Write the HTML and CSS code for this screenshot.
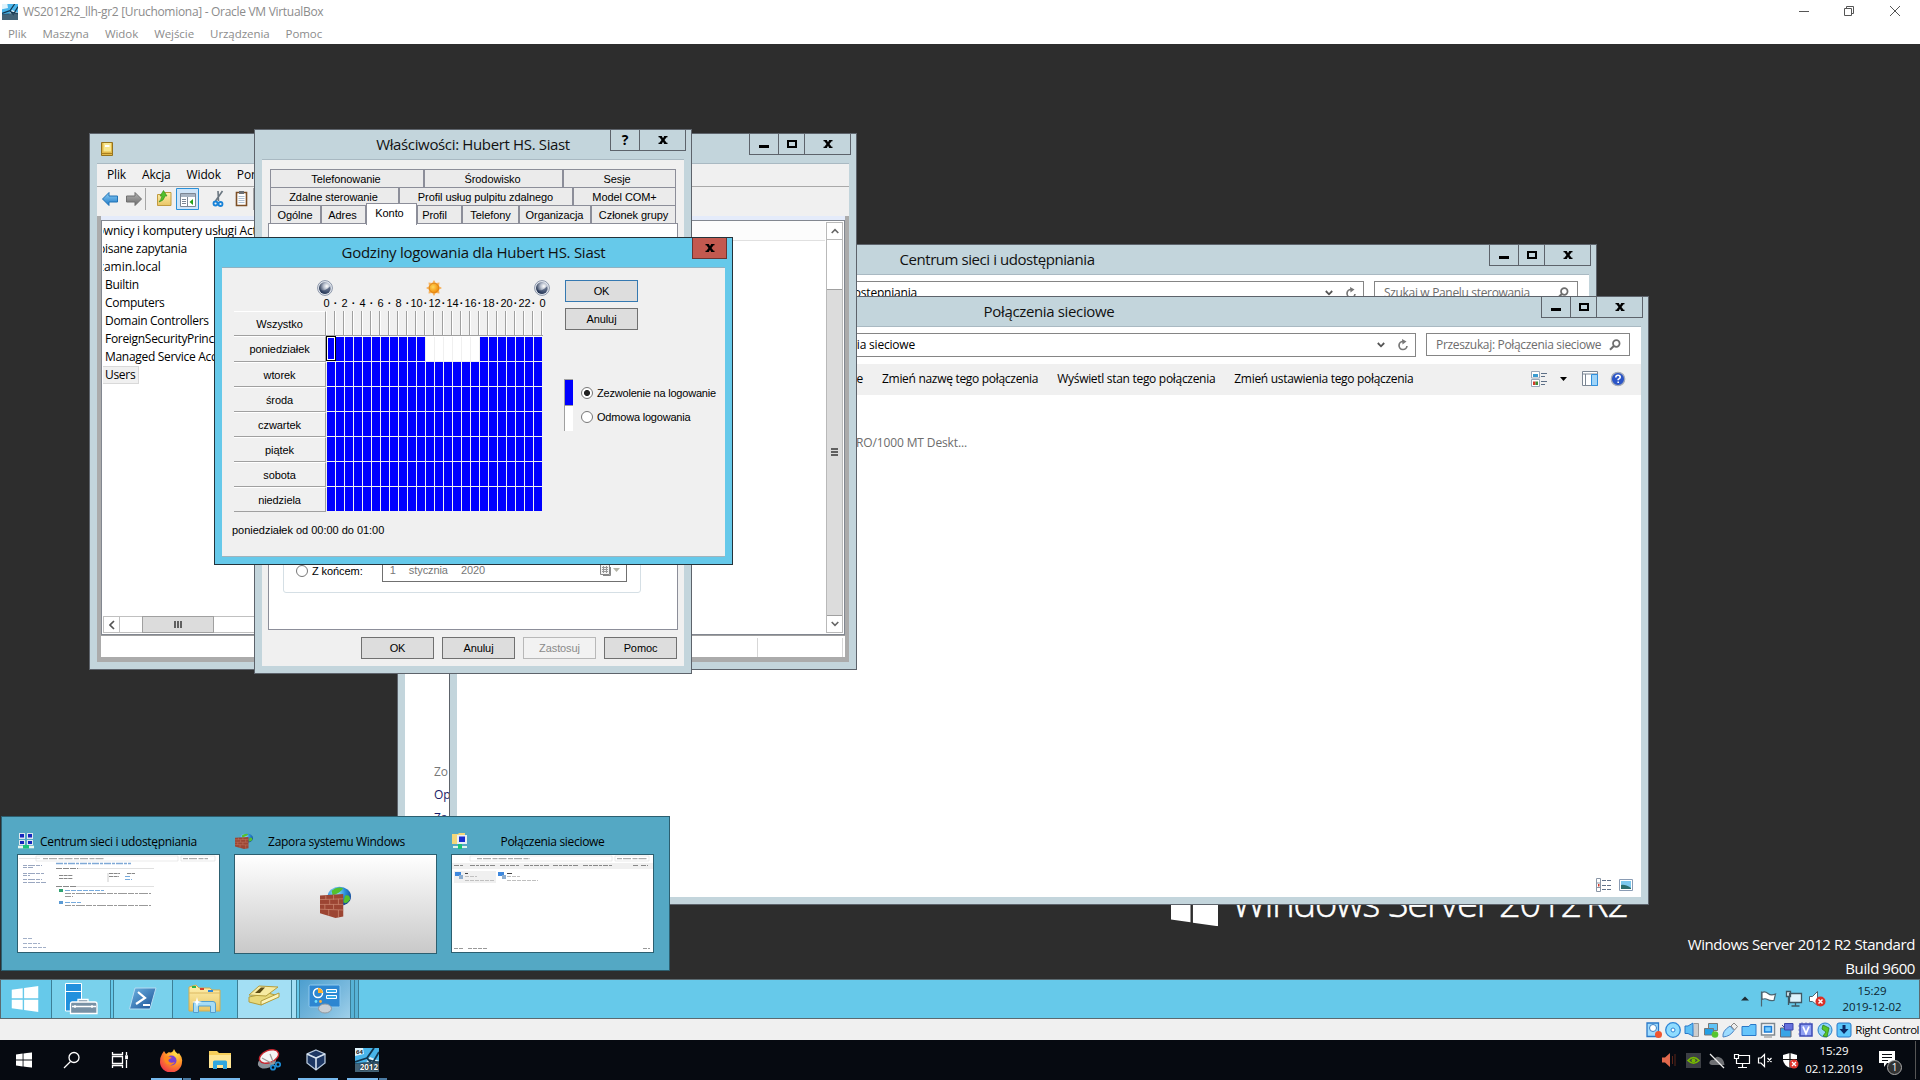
FILE: index.html
```html
<!DOCTYPE html>
<html lang="pl">
<head>
<meta charset="utf-8">
<title>WS2012R2_llh-gr2 [Uruchomiona] - Oracle VM VirtualBox</title>
<link rel="stylesheet" href="styles.css">
</head>
<body>
<svg class="defs" width="0" height="0">
  <defs>
    <linearGradient id="gBlue" x1="0" y1="0" x2="0" y2="1"><stop offset="0" stop-color="#8fd0f5"/><stop offset="1" stop-color="#1b78c8"/></linearGradient>
    <linearGradient id="gGray" x1="0" y1="0" x2="0" y2="1"><stop offset="0" stop-color="#b5b5b5"/><stop offset="1" stop-color="#6a6a6a"/></linearGradient>
    <linearGradient id="gFold" x1="0" y1="0" x2="0" y2="1"><stop offset="0" stop-color="#fff1b0"/><stop offset="1" stop-color="#e9c565"/></linearGradient>
    <linearGradient id="gPs" x1="0" y1="0" x2="1" y2="1"><stop offset="0" stop-color="#6fb4e4"/><stop offset="1" stop-color="#174f94"/></linearGradient>
    <radialGradient id="gMoon" cx=".65" cy=".35" r=".7"><stop offset="0" stop-color="#ffffff"/><stop offset=".4" stop-color="#b4bccb"/><stop offset="1" stop-color="#1c2b48"/></radialGradient>
    <radialGradient id="gSun" cx=".4" cy=".4" r=".6"><stop offset="0" stop-color="#ffd75a"/><stop offset="1" stop-color="#f08c0a"/></radialGradient>
    <radialGradient id="gGlobe" cx=".35" cy=".3" r=".8"><stop offset="0" stop-color="#a8ecff"/><stop offset=".5" stop-color="#2a8ddb"/><stop offset="1" stop-color="#0c3584"/></radialGradient>
    <radialGradient id="gFox" cx=".7" cy=".2" r=".9"><stop offset="0" stop-color="#ffe04a"/><stop offset=".5" stop-color="#ff9127"/><stop offset="1" stop-color="#f0324c"/></radialGradient>
    <symbol id="moon" viewBox="0 0 16 16"><circle cx="8" cy="8" r="7.4" fill="#e8ecf2" stroke="#8994a8"/><circle cx="8" cy="8" r="6" fill="url(#gMoon)"/><path d="M2.600 9.500C6 11.500 10 10 12.500 6.500C14.500 9 12 13.800 8 13.800C5 13.800 3 11.500 2.600 9.500Z" fill="#25375a" opacity=".6"/></symbol>
    <symbol id="min" viewBox="0 0 10 10"><rect y="6" width="10" height="3"/></symbol>
    <symbol id="max" viewBox="0 0 10 10"><path d="M0 1H10V9H0ZM2 3V7H8V3Z" fill-rule="evenodd"/></symbol>
    <symbol id="close" viewBox="0 0 10 10"><path d="M0.500 1H3.800L5 3.200L6.200 1H9.500V2.200H8.600L6.500 5L8.600 7.800H9.500V9H6.200L5 6.800L3.800 9H.5V7.800H1.400L3.500 5L1.400 2.200H.5Z"/></symbol>
    <symbol id="mag" viewBox="0 0 12 12"><circle cx="7.300" cy="4.500" r="3.300" fill="none" stroke="#6d6d6d" stroke-width="1.700"/><path d="M4.800 7L1 10.800" stroke="#6d6d6d" stroke-width="2"/></symbol>
    <symbol id="chev" viewBox="0 0 8 8"><path d="M.8 2L4 5.300L7.200 2" fill="none" stroke="#555" stroke-width="1.800"/></symbol>
    <symbol id="refresh" viewBox="0 0 12 12"><path d="M6 2.500A4 4 0 1 0 10 7" fill="none" stroke="#777" stroke-width="1.700"/><path d="M5 0L9.500 2.600L5.500 5.400Z" fill="#777"/></symbol>
    <symbol id="flag8" viewBox="0 0 27 26"><path d="M0 3.800L11.200 2.200V12.300H0ZM12.600 2L27 0V12.300H12.600ZM0 13.700H11.200V23.800L0 22.200ZM12.600 13.700H27V26L12.600 24Z"/></symbol>
    <symbol id="wall" viewBox="0 0 32 40"><circle cx="20" cy="13" r="12" fill="url(#gGlobe)"/><path d="M12 6Q18 0 24 3Q20 9 13 12ZM26 12Q31 10 31 17Q27 24 24 20Z" fill="#54c02e"/><path d="M0 12L24 10V38L16 40L0 34Z" fill="#9c4533"/><path d="M0 17L24 16M0 23L24 23M0 29L24 30M6 12V17M14 11V17M10 17V23M19 16V23M5 23V29M14 23V29M9 29V37M19 30V39" stroke="#cf8b74" stroke-width=".8" fill="none"/></symbol>
    <symbol id="pcs" viewBox="0 0 16 16"><path d="M1 0H7V6H1ZM9 0H15V6H9ZM1 7H7V12H1ZM9 7H15V12H9Z" fill="#dce6ee"/><path d="M2 1H6V4.500H2ZM10 1H14V4.500H10ZM2 8H6V11H2ZM10 8H14V11H10Z" fill="#1626bd"/><path d="M0 14H16" stroke="#e6f5ee" stroke-width="2.600"/><path d="M5 12H11V15.500H5Z" fill="#19c37b"/></symbol>
    <symbol id="pcfold" viewBox="0 0 16 16"><path d="M0 1H6L7 0H13V11H0Z" fill="#f3d77b"/><path d="M5 2H15V11H5Z" fill="#e8eef6"/><path d="M7 3.500H13V9H7Z" fill="#1a2ed0"/><path d="M1 14H15" stroke="#dff4ea" stroke-width="2"/><path d="M6 11H10V16H6Z" fill="#19c37b"/></symbol>
    <symbol id="disc" viewBox="0 0 16 16"><circle cx="8" cy="8" r="7.300" fill="#8fdcff" stroke="#2e86d6" stroke-width="1.300"/><circle cx="8" cy="8" r="2" fill="#fff" stroke="#2e86d6"/></symbol>
    <symbol id="vmicon" viewBox="0 0 24 24"><rect width="24" height="24" fill="#dff3fc"/><path d="M8 0H24V13L15 9L10 16H0V8L9 6Z" fill="#48b4ea"/><path d="M19 0L12 10L17 16L24 4M12 10L0 14M14 12L24 15" stroke="#12364f" stroke-width="1.800" fill="none"/><path d="M0 15L24 13V24H0Z" fill="#28495f" opacity=".85"/></symbol>
  </defs>
</svg>

<div class="host">
  <header class="vb-title">
    <svg class="vb-icon" viewBox="0 0 24 24" width="16" height="16"><use href="#vmicon"/></svg>
    <span class="vb-name">WS2012R2_llh-gr2 [Uruchomiona] - Oracle VM VirtualBox</span>
    <svg class="vb-controls" width="104" height="12" viewBox="0 0 104 12" fill="none" stroke="#555"><path d="M1 6.500H11M46.500 3.500H53.500V10.500H46.500ZM48.500 3.500V1.500H55.500V8.500H53.500M92 1L102 11M102 1L92 11"/></svg>
  </header>
  <nav class="vb-menu"><span>Plik</span><span>Maszyna</span><span>Widok</span><span>Wejście</span><span>Urządzenia</span><span>Pomoc</span></nav>

  <main class="desktop">
    <svg class="wall-flag" viewBox="0 0 27 26" width="47" height="47" fill="#fff"><use href="#flag8"/></svg>
    <div class="wall-name">Windows Server 2012 <span>R2</span></div>
    <div class="build">Windows Server 2012 R2 Standard<br>Build 9600</div>

    <section class="win centrum">
      <div class="caption"><h2>Centrum sieci i udostępniania</h2>
        <div class="cap-btns"><b><svg width="10" height="10"><use href="#min"/></svg></b><b><svg width="10" height="10"><use href="#max"/></svg></b><b><svg width="10" height="10"><use href="#close"/></svg></b></div></div>
      <div class="client">
        <div class="addr-row">
          <div class="addr"><span class="crumb">Centrum sieci i udostępniania</span><svg class="a-chev" width="8" height="8"><use href="#chev"/></svg><svg width="12" height="12"><use href="#refresh"/></svg></div>
          <div class="search"><span>Szukaj w Panelu sterowania</span><svg width="12" height="12"><use href="#mag"/></svg></div>
        </div>
        <div class="see-also"><span class="dim">Zo</span><span>Op</span><span>Za</span></div>
      </div>
    </section>

    <section class="win conn">
      <div class="caption"><h2>Połączenia sieciowe</h2>
        <div class="cap-btns"><b><svg width="10" height="10"><use href="#min"/></svg></b><b><svg width="10" height="10"><use href="#max"/></svg></b><b><svg width="10" height="10"><use href="#close"/></svg></b></div></div>
      <div class="client">
        <div class="addr-row">
          <div class="addr"><span class="crumb">Połączenia sieciowe</span><svg class="a-chev" width="8" height="8"><use href="#chev"/></svg><svg width="12" height="12"><use href="#refresh"/></svg></div>
          <div class="search"><span>Przeszukaj: Połączenia sieciowe</span><svg width="12" height="12"><use href="#mag"/></svg></div>
        </div>
        <div class="cmdbar">
          <span class="c0">e</span><span class="c1">Zmień nazwę tego połączenia</span><span class="c2">Wyświetl stan tego połączenia</span><span class="c3">Zmień ustawienia tego połączenia</span>
          <svg class="cmd-icons" width="96" height="18" viewBox="0 0 96 18">
            <path d="M.5 1.500H8.500V8H.5ZM.5 9.500H8.500V16.500H.5Z" fill="#fff" stroke="#9aa7b8"/><path d="M2 4H7V7H2Z" fill="#3a9bd0"/><path d="M2 11.500H4.500V15H2Z" fill="#d43b2b"/><path d="M4.500 11.500H7V15H4.500Z" fill="#3b8b35"/>
            <path d="M10 3.500H16M10 6.500H14M10 11.500H16M10 14.500H14" stroke="#5c6f86"/>
            <path d="M29 7H36L32.500 11Z" fill="#000"/>
            <path d="M51.500 1.500H66.500V15.500H51.500Z" fill="#fff" stroke="#7c8794"/><path d="M51.500 4H66.500M54.500 4V15" stroke="#7c8794"/><path d="M60.500 4.500H66.500V15.500H60.500Z" fill="#9fd4f8" stroke="#2f8fdd"/>
            <circle cx="87" cy="9" r="6.700" fill="#2b55c7" stroke="#a5acb8" stroke-width="1.300"/><path d="M84.800 7.400Q84.800 5.200 87 5.200T89.200 7.200Q89.200 8.300 87.200 9.400V10.300M87.200 11.600V13" stroke="#fff" stroke-width="1.600" fill="none"/>
          </svg>
        </div>
        <p class="adapter">Intel(R) PRO/1000 MT Deskt...</p>
        <svg class="view-icons" width="38" height="14" viewBox="0 0 38 14"><path d="M.5 .5H4.500V13.500H.5ZM.5 5H4.500M.5 9.500H4.500" fill="#fff" stroke="#8a96a6"/><path d="M6 2.500H10M11 2.500H15M6 7.500H10M11 7.500H15M6 11.500H10M11 11.500H15" stroke="#61728a"/><path d="M2 6H3.500V8.500H2Z" fill="#d43b2b"/><path d="M23.500 1.500H36.500V12.500H23.500Z" fill="#fff" stroke="#8a9cb4"/><path d="M25 3H35V11H25Z" fill="#7cc9ee"/><path d="M25 7Q29 6 35 10V11H25Z" fill="#2b6e6d"/></svg>
      </div>
    </section>

    <section class="win mmc">
      <div class="caption">
        <svg class="mmc-icon" width="13" height="16" viewBox="0 0 13 16"><path d="M.5 1.500H11.500V14.500H.5Z" fill="#e2b94a" stroke="#94731e"/><path d="M2.500 2H10V10.500H2.500Z" fill="#f8e78e"/><path d="M4 4H8.500V6H4Z" fill="#fff"/><path d="M.5 12.500H11.500" stroke="#a97f1f"/></svg>
        <div class="cap-btns"><b><svg width="10" height="10"><use href="#min"/></svg></b><b><svg width="10" height="10"><use href="#max"/></svg></b><b><svg width="10" height="10"><use href="#close"/></svg></b></div></div>
      <div class="client">
        <nav class="mmc-menu"><span>Plik</span><span>Akcja</span><span>Widok</span><span>Pomoc</span></nav>
        <div class="mmc-tools">
          <svg width="156" height="24" viewBox="0 0 156 24">
            <path d="M.5 12L7 5.500V9H15.500V15H7V18.500Z" fill="url(#gBlue)" stroke="#2173b5"/>
            <path d="M39.500 12L33 5.500V9H24.500V15H33V18.500Z" fill="url(#gGray)" stroke="#6f6f6f"/>
            <path d="M43.500 1V23M151.500 1V23" stroke="#a6a6a6"/>
            <path d="M55.500 7.500H60L61.500 5.500H69V18.500H55.500Z" fill="url(#gFold)" stroke="#c19a3f"/><path d="M57 15Q59 13 60 9L58 9L61.500 3.500L65 9H63Q62 14 57 15Z" fill="#52bf2c" stroke="#2f8a18" stroke-width=".6"/>
            <path d="M74.500 1.500H96.500V22.500H74.500Z" fill="#cfe4f7" stroke="#2a90d8"/><path d="M78.500 6.500H93.500V19.500H78.500Z" fill="#fff" stroke="#7d8794"/><path d="M79 7H93V10H79Z" fill="#a8b4c2"/><path d="M85.500 10V19M80 12.500H84M80 14.500H84M80 16.500H84" stroke="#7d8794"/><path d="M91 12V18L87.500 15Z" fill="#25a11a"/>
            <path d="M113.500 14L120.500 4M116.500 14L116 4" stroke="#6a7680" stroke-width="1.600"/><circle cx="113.500" cy="16.500" r="2" fill="none" stroke="#1883d8" stroke-width="1.800"/><circle cx="118.500" cy="17" r="2" fill="none" stroke="#1883d8" stroke-width="1.800"/>
            <path d="M134.500 5.500H144.500V18.500H134.500Z" fill="#fff" stroke="#7d4f26" stroke-width="1.600"/><path d="M137 4H142V7H137Z" fill="#6b6f74"/><path d="M136.500 9.500H142.500M136.500 11.500H142.500M136.500 13.500H142.500M136.500 15.500H142.500" stroke="#9ab0c7" stroke-width=".8"/>
          </svg>
        </div>
        <div class="mmc-body">
          <div class="panes">
            <div class="tree-pane">
              <ul class="tree">
                <li class="t-root">Użytkownicy i komputery usługi Active</li><li class="t-saved">Zapisane zapytania</li><li class="t-dom">egzamin.local</li>
                <li>Builtin</li><li>Computers</li><li>Domain Controllers</li><li>ForeignSecurityPrincipals</li><li>Managed Service Accounts</li><li><span class="sel">Users</span></li>
              </ul>
              <div class="hscroll"><b><svg width="6" height="10" viewBox="0 0 6 10"><path d="M5 1L1 5L5 9" fill="none" stroke="#555" stroke-width="1.700"/></svg></b><i></i></div>
            </div>
            <div class="list-pane"><div class="list-head"></div></div>
            <div class="vscroll"><b><svg width="8" height="6" viewBox="0 0 8 6"><path d="M.7 5L4 1.700L7.300 5" fill="none" stroke="#666" stroke-width="1.600"/></svg></b><span class="gap"></span><span class="thumb"><i></i></span><b><svg width="8" height="6" viewBox="0 0 8 6"><path d="M.7 1L4 4.300L7.300 1" fill="none" stroke="#666" stroke-width="1.600"/></svg></b></div>
          </div>
          <div class="mmc-status"></div>
        </div>
      </div>
    </section>

    <section class="win props">
      <div class="caption"><h2>Właściwości: Hubert HS. Siast</h2><div class="cap-btns two"><b class="q">?</b><b><svg width="10" height="10"><use href="#close"/></svg></b></div></div>
      <div class="client">
        <div class="tabs r1"><span>Telefonowanie</span><span>Środowisko</span><span>Sesje</span></div>
        <div class="tabs r2"><span>Zdalne sterowanie</span><span>Profil usług pulpitu zdalnego</span><span>Model COM+</span></div>
        <div class="tabs r3"><span>Ogólne</span><span>Adres</span><span class="on">Konto</span><span>Profil</span><span>Telefony</span><span>Organizacja</span><span>Członek grupy</span></div>
        <div class="page">
          <div class="group"><i class="radio"></i><span class="lbl">Z końcem:</span>
            <div class="date"><span>1</span><span>stycznia</span><span>2020</span><svg width="20" height="12" viewBox="0 0 20 12"><path d="M.5 .5H9.500V10.500H.5Z" fill="#f4f4f4" stroke="#888"/><path d="M2 3.500H8M2 5.500H8M2 7.500H8M3.500 2V9M6.500 2V9" stroke="#999"/><path d="M10.500 3V11.500H3" fill="none" stroke="#888"/><path d="M13 4H20L16.500 8Z" fill="#b5b5a8"/></svg></div>
          </div>
        </div>
        <div class="dlg-btns"><button>OK</button><button>Anuluj</button><button class="off">Zastosuj</button><button>Pomoc</button></div>
      </div>
    </section>

    <section class="win hours-dlg">
      <div class="caption"><h2>Godziny logowania dla Hubert HS. Siast</h2><div class="cap-btns one"><b><svg width="10" height="10"><use href="#close"/></svg></b></div></div>
      <div class="client">
        <div class="sched">
          <div class="sky"><svg width="16" height="16"><use href="#moon"/></svg><svg width="16" height="16" viewBox="0 0 16 16"><path d="M8 0L9.800 3L13.500 2.500L13 6.200L16 8L13 9.800L13.500 13.500L9.800 13L8 16L6.200 13L2.500 13.500L3 9.800L0 8L3 6.200L2.500 2.500L6.200 3Z" fill="#f6b25c"/><circle cx="8" cy="8" r="4.800" fill="url(#gSun)" stroke="#d97b0c" stroke-width=".7"/></svg><svg width="16" height="16"><use href="#moon"/></svg></div>
          <div class="ticks"><span>0</span><i>·</i><span>2</span><i>·</i><span>4</span><i>·</i><span>6</span><i>·</i><span>8</span><i>·</i><span>10</span><i>·</i><span>12</span><i>·</i><span>14</span><i>·</i><span>16</span><i>·</i><span>18</span><i>·</i><span>20</span><i>·</i><span>22</span><i>·</i><span>0</span></div>
          <div class="day all"><b>Wszystko</b><div class="cols"></div></div>
          <div class="day mon"><b>poniedziałek</b><div class="bar h11"><i class="cursor"></i></div><div class="bar h6 deny"></div><div class="bar h7"></div></div>
          <div class="day"><b>wtorek</b><div class="bar"></div></div>
          <div class="day"><b>środa</b><div class="bar"></div></div>
          <div class="day"><b>czwartek</b><div class="bar"></div></div>
          <div class="day"><b>piątek</b><div class="bar"></div></div>
          <div class="day"><b>sobota</b><div class="bar"></div></div>
          <div class="day"><b>niedziela</b><div class="bar"></div></div>
          <p class="range">poniedziałek od 00:00 do 01:00</p>
        </div>
        <div class="side">
          <button class="def">OK</button><button>Anuluj</button>
          <div class="opts"><div class="swatches"><i class="allow"></i><i></i></div>
            <div class="radios"><label><i class="radio checked"></i><span class="o1">Zezwolenie na logowanie</span></label><label><i class="radio"></i><span class="o2">Odmowa logowania</span></label></div></div>
        </div>
      </div>
    </section>

    <aside class="peek">
      <div class="card"><h3><svg width="16" height="16"><use href="#pcs"/></svg><span>Centrum sieci i udostępniania</span></h3>
        <svg class="shot" width="201" height="97" viewBox="0 0 201 97" fill="none"><path d="M1 3.500H22" stroke="#e6e6e6"/><path d="M18 1H160V6H18ZM163 1H197V6H163Z" stroke="#d4d4d4" stroke-width=".5"/><path d="M25 3.700H87M165 3.700H190" stroke="#9a9a9a" stroke-dasharray="5 1 8 1.500"/><path d="M5 10.500H24M5 12.500H15M5 18.500H26M5 20.500H12M5 24.500H24M5 27.500H28" stroke="#9aa7c0" stroke-dasharray="4 1 7 1"/><path d="M38 8.500H113" stroke="#7fa9d6" stroke-width="1.500" stroke-dasharray="7 1 3 1"/><path d="M38 13.500H60M38 31.500H58" stroke="#888" stroke-dasharray="6 1"/><path d="M60 13.500H136M58 31.500H136" stroke="#e0e0e0"/><path d="M41 20.500H55M41 23.500H55M91 18.500H102M91 21.500H101M109 18.500H117" stroke="#888" stroke-dasharray="4 .6"/><path d="M107 21.500H113M107 24.500H114M47 35.500H86M47 47.500H63" stroke="#77abdd" stroke-dasharray="5 1"/><path d="M47 38.500H133M47 41.500H55M47 50.500H133" stroke="#999" stroke-dasharray="6 1 3 1 9 1"/><path d="M41 34H45V37H41Z" fill="#31a371"/><path d="M41 46H45V49H41Z" fill="#5b9bd5"/><path d="M90 18V27" stroke="#ccc"/><path d="M5 83.500H15M5 88.500H22M5 92.500H28" stroke="#a3b0c8" stroke-dasharray="4 1"/></svg></div>
      <div class="card"><h3><svg width="18" height="16" viewBox="0 0 32 40" preserveAspectRatio="none"><use href="#wall"/></svg><span>Zapora systemu Windows</span></h3>
        <div class="shot blank"><svg width="31" height="32" viewBox="0 0 32 40" preserveAspectRatio="none"><use href="#wall"/></svg></div></div>
      <div class="card"><h3><svg width="16" height="16"><use href="#pcfold"/></svg><span>Połączenia sieciowe</span></h3>
        <svg class="shot" width="201" height="97" viewBox="0 0 201 97" fill="none"><path d="M18 1H160V6H18ZM163 1H197V6H163Z" stroke="#d4d4d4" stroke-width=".5"/><path d="M25 3.700H78M165 3.700H196" stroke="#9a9a9a" stroke-dasharray="5 1 8 1.500"/><path d="M0 8H201V14H0Z" fill="#f0f0f0"/><path d="M2 10.500H12M18 10.500H44M48 10.500H68M72 10.500H97M101 10.500H127M131 10.500H161M181 10.500H186M189 10.500H196" stroke="#888" stroke-dasharray="5 1 3 1"/><path d="M2 16H44V28H2Z" fill="#f0f0f0"/><path d="M3 17H9V21H3ZM46 17H52V21H46Z" fill="#3e88de"/><path d="M7 20H11V24H7ZM50 20H54V24H50Z" fill="#8eaecf"/><path d="M13 18.500H16M55 18.500H60" stroke="#444"/><path d="M13 21.500H25M13 25.500H42M55 21.500H68M55 25.500H86" stroke="#c0c0c0" stroke-dasharray="4 1"/><path d="M2 93.500H12M16 93.500H36M191 93.500H198" stroke="#999" stroke-dasharray="4 1"/></svg></div>
    </aside>
  </main>

  <div class="vm-bar">
    <div class="vt start"><svg width="28" height="26" viewBox="0 0 27 26" fill="#fff"><use href="#flag8"/></svg></div>
    <div class="vt srv"><svg width="34" height="34" viewBox="0 0 34 34"><path d="M1.500 1.500H17.500V29H1.500Z" fill="#2190dd" stroke="#fff"/><path d="M1.500 9.500H17.500" stroke="#fff"/><path d="M14 20V17.500H24V20M8 20H31Q33 20 33 22V31.500H6.500V22Q6.500 20 8 20Z" fill="#7891a5" stroke="#fff" stroke-width="1.300"/><path d="M8 24.500H32M11 23V26M28 23V26" stroke="#fff" stroke-width="1.300"/></svg></div>
    <div class="vt ps"><svg width="30" height="26" viewBox="0 0 30 26"><path d="M7 2H28L22 23H1.500Z" fill="url(#gPs)" stroke="#b6dcf2"/><path d="M10 6L17 12L8 18M15 19H22" stroke="#fff" stroke-width="2.200" fill="none"/></svg></div>
    <div class="vt exp"><svg width="34" height="30" viewBox="0 0 34 30"><path d="M1 3L8 1L11 4H22L24 6H32V27H1Z" fill="url(#gFold)" stroke="#d3ad50"/><path d="M1 9H32" stroke="#dcb963"/><path d="M4 2H8V4H4Z" fill="#2cb34b"/><path d="M12 4H16V6H12Z" fill="#d8422c"/><path d="M20 6H25V8H20Z" fill="#2f87d8"/><path d="M5.500 28.500V20Q5.500 17.500 8 17.500H25Q27.500 17.500 27.500 20V28.500H22.500V22H10.500V28.500Z" fill="#a6dcf6" stroke="#539fce"/><path d="M9 13L10 17L14 18L10 19L9 23L8 19L4 18L8 17Z" fill="#fff"/></svg></div>
    <div class="vt ad"><svg width="34" height="22" viewBox="0 0 34 22"><path d="M2 12L21 8L32 11L14 20L2 17Z" fill="#e8d97a" stroke="#b39d3c"/><path d="M2 10L12 1L31 2L19 11Z" fill="#f7eba2" stroke="#b39d3c"/><path d="M8 8L14 2.500L18 2.500L13 8Z" fill="#5b4c14"/><path d="M14 20V16L32 8V12Z" fill="#fbf3b9" stroke="#b39d3c"/></svg></div>
    <div class="vt stack1"></div>
    <div class="vt cp"><svg width="34" height="30" viewBox="0 0 34 30"><rect x="1" y="1" width="31" height="22" rx="1.500" fill="#2d86d1" stroke="#8ec9ee"/><circle cx="10" cy="9" r="4.500" fill="none" stroke="#fff" stroke-width="1.500"/><path d="M10 4A5 5 0 0 1 15 9L10 9Z" fill="#ffaf2b"/><path d="M18.500 5.500H28.500V8.500H18.500ZM18.500 11.500H28.500V14.500H18.500Z" fill="#35a9e8" stroke="#fff"/><circle cx="8" cy="17.500" r="1.400" fill="#6de0ff"/><circle cx="12.500" cy="17.500" r="1.400" fill="#ffb13b"/><ellipse cx="17" cy="24.500" rx="6.500" ry="4.500" fill="#c9d0d6" stroke="#8f989f"/></svg></div>
    <div class="vt stack2"></div>
    <svg class="vm-tray" width="92" height="20" viewBox="0 0 92 20"><path d="M4 11.500L8 7.500L12 11.500Z" fill="#1c2b33"/><path d="M24.500 2.500V17.500M25 3.500Q28 2 31 4.500T38.500 5L37 11.500Q33 12 30.500 10.500T25 10.500Z" fill="#fff" stroke="#4c6470" stroke-width="1.200"/><path d="M52.500 4.500H64.500V13.500H52.500ZM58.500 14V16.500M54.500 17H62.500M49.500 2.500H53.500V7.500H49.500ZM51.500 8V16" fill="#dff3fb" stroke="#3f5863" stroke-width="1.300"/><path d="M72.500 7.500H75.500L80.500 2.500V16.500L75.500 12.500H72.500Z" fill="#fff" stroke="#4c6470"/><circle cx="83.500" cy="12.500" r="5" fill="#da2f26"/><path d="M81.500 10.500L85.500 14.500M85.500 10.500L81.500 14.500" stroke="#fff" stroke-width="1.500"/></svg>
    <div class="vm-clock">15:29<br>2019-12-02</div>
  </div>

  <div class="vb-status">
    <svg viewBox="0 0 16 16"><path d="M1 1H12.500V14.500H1Z" fill="#9fdcff" stroke="#2a78c8" stroke-width="1.300"/><circle cx="7" cy="6" r="3.500" fill="#fff" stroke="#3e7fc0"/><circle cx="12.500" cy="12.500" r="3.500" fill="#f0542e"/></svg>
    <svg><use href="#disc"/></svg>
    <svg viewBox="0 0 16 16"><path d="M10 1.500H14.500V14.500H8" fill="#ccc" stroke="#999"/><path d="M1 4H4L9 1V14L4 11.500H1Z" fill="#5fc0f5" stroke="#2a78c8"/></svg>
    <svg viewBox="0 0 16 16"><path d="M5.500 1.500H14.500V8.500H5.500Z" fill="#5ec3f7" stroke="#777"/><path d="M1.500 6.500H10.500V13H1.500Z" fill="#239fe4" stroke="#777"/><circle cx="12" cy="12.500" r="3.300" fill="#56c530"/></svg>
    <svg viewBox="0 0 16 16"><path d="M1 15Q0 9 8 4L12 8.500Q8 14.500 1 15Z" fill="#9ddcff" stroke="#4a83c3"/><path d="M9 4L12 1L15.500 4.500L12.500 8Z" fill="#eee" stroke="#888"/></svg>
    <svg viewBox="0 0 16 16"><path d="M1 4.500H8L9.500 2.500H15V13.500H1Z" fill="#66c5fb" stroke="#2a78c8"/></svg>
    <svg viewBox="0 0 16 16"><path d="M1.500 1.500H14.500V13H1.500Z" fill="#fff" stroke="#7e8890" stroke-width="1.500"/><path d="M4.500 4.500H11.500V10H4.500Z" fill="#79cdff" stroke="#1d7ed6" stroke-width="1.500"/><path d="M4 15H12" stroke="#888"/></svg>
    <svg viewBox="0 0 16 16"><path d="M1.500 6H12V15H1.500Z" fill="#37a4e6" stroke="#667"/><path d="M5.500 1.500H14V8H5.500Z" fill="#6670dd" stroke="#3b45a8"/><path d="M3 3L5 5" stroke="#3b45a8"/></svg>
    <svg viewBox="0 0 16 16"><path d="M2 2H14V14H2Z" fill="#8fa0f3" stroke="#3d49b4" stroke-width="1.500"/><path d="M.5 4H15.500M.5 8H15.500M.5 12H15.500M4 .5V15.500M8 .5V15.500M12 .5V15.500" stroke="#3d49b4" stroke-dasharray="1 14"/><path d="M5 4.500L8 11.500L11 4.500" fill="none" stroke="#fff" stroke-width="1.800"/></svg>
    <svg viewBox="0 0 16 16"><circle cx="8" cy="8" r="7" fill="#8fd5f8" stroke="#2c7fc6"/><path d="M6 3L12 6L10 15L6 14L9 10L5 7Z" fill="#58c527" stroke="#2e8414" stroke-width=".8"/></svg>
    <svg viewBox="0 0 16 16"><rect x="1" y="1" width="14" height="14" rx="2" fill="#5bc6fb" stroke="#2a78c8"/><path d="M6.500 3H9.500V7H12.500L8 12L3.500 7H6.500Z" fill="#0b2a66"/></svg>
    <span>Right Control</span>
  </div>

  <footer class="host-bar">
    <div class="ht"><svg width="16" height="16" viewBox="0 0 27 26" fill="#fff"><use href="#flag8"/></svg></div>
    <div class="ht"><svg width="18" height="18" viewBox="0 0 18 18" fill="none" stroke="#fff" stroke-width="1.300"><circle cx="11" cy="6.500" r="5"/><path d="M7.500 10.500L1 17"/></svg></div>
    <div class="ht"><svg width="18" height="18" viewBox="0 0 18 18" fill="none" stroke="#fff" stroke-width="1.300"><path d="M1.500 1V3.500H11.500V1M1.500 17V14.500H11.500V17M1.500 5.500H11.500V12.500H1.500ZM15.500 1V4M15.500 9V17"/><path d="M14.800 5H16.300V7.500H14.800Z" fill="#fff"/></svg></div>
    <div class="ht on multi fx"><svg width="24" height="24" viewBox="0 0 24 24"><path d="M3 6L5 3L7 6L10 4Q13 6 15 1Q16 4 19 6L20 5Q24 10 23 14A11 10.500 0 0 1 1 14Q1 9 3 6Z" fill="url(#gFox)"/><circle cx="12.500" cy="12.500" r="5" fill="#7741d4"/><path d="M5 9Q10 7 13 10Q9 11 9.500 13Q11 16 16 14Q13 19 8 16Q5 14 5 9Z" fill="#ff8a1e"/></svg></div>
    <div class="ht on"><svg width="22" height="20" viewBox="0 0 22 20"><path d="M0 1H8L10 3H22V18H0Z" fill="#f7cf5a"/><path d="M0 5H22V18H0Z" fill="#ffe694"/><path d="M4 19V12Q4 10.500 5.500 10.500H16.500Q18 10.500 18 12V19H14V15H8V19Z" fill="#2ea8e0"/></svg></div>
    <div class="ht"><svg width="24" height="22" viewBox="0 0 24 22"><ellipse cx="10" cy="13" rx="9.500" ry="6" fill="#8b9299" transform="rotate(-22 10 13)"/><ellipse cx="12" cy="7.500" rx="10" ry="6" fill="#f4f4f4" stroke="#c8262e" stroke-width="1.400" transform="rotate(-22 12 7.500)"/><path d="M5 9L16 15M13 5L17 15" stroke="#999" stroke-width="1.200"/><circle cx="16" cy="18.500" r="2.200" fill="none" stroke="#1c89d1" stroke-width="1.800"/><circle cx="21" cy="15.500" r="2.200" fill="none" stroke="#1c89d1" stroke-width="1.800"/></svg></div>
    <div class="ht on vbox"><svg width="20" height="22" viewBox="0 0 20 22"><path d="M10 1L19 5V14L10 21L1 14V5Z" fill="#1d3763" stroke="#b5c7db" stroke-width="1.300"/><path d="M1 5L10 9L19 5M10 9V21" stroke="#d7e3ef" stroke-width="1.600" fill="none"/><path d="M10 2.500L16 5L10 7.500L4 5Z" fill="#1d3763"/></svg></div>
    <div class="ht on multi vm"><svg width="24" height="24" viewBox="0 0 24 24"><use href="#vmicon"/></svg><small>64</small><em>2012</em></div>
    <svg class="h-tray" width="144" height="20" viewBox="0 0 144 20">
      <path d="M1 7.500H4L9 3V17L4 12.500H1Z" fill="#e0694d"/><path d="M11.500 6V14M14 4V16" stroke="#5b2418"/>
      <rect x="25" y="3" width="15" height="15" fill="#3c3f45"/><path d="M27 10.500Q32.500 4.500 38 10.500Q32.500 16 27 10.500Z" fill="none" stroke="#76b900" stroke-width="1.600"/><circle cx="32.500" cy="10.500" r="2" fill="#76b900"/>
      <path d="M51 15Q47 14.500 49 11Q51 9 53 10Q55 5 59 7.500Q63 9 63.500 15Z" fill="#6e7074"/><path d="M49 4L63 18" stroke="#eee" stroke-width="1.300"/>
      <path d="M77.500 5.500H88.500V13.500H75.500V9M81.500 13.500V17.500M77 17.500H86M73.500 4.500H77.500V8.500H73.500Z" fill="none" stroke="#fff" stroke-width="1.200"/>
      <path d="M97.500 8H100L103.500 4.500V16.500L100 13H97.500ZM106.500 8L110.500 12M110.500 8L106.500 12" fill="none" stroke="#fff" stroke-width="1.200"/>
      <path d="M129 3L136 5V10Q135.500 15 129 18Q122.500 15 122 10V5Z" fill="#fff"/><path d="M129 3V18M122 9.500H136" stroke="#111" stroke-width="1.200"/><circle cx="133" cy="14" r="4.500" fill="#e0342c"/><path d="M131 12L135 16M135 12L131 16" stroke="#fff" stroke-width="1.300"/>
    </svg>
    <div class="h-clock">15:29<br>02.12.2019</div>
    <div class="notif"><svg width="17" height="17" viewBox="0 0 17 17"><path d="M0 0H16V12H8L5 16V12H0Z" fill="#fff"/><path d="M3 3.500H13M3 6.500H13M3 9.500H9" stroke="#0a0d12" stroke-width="1.100"/></svg><b>1</b></div>
  </footer>
</div>
</body>
</html>
```
FILE: styles.css
```css
* { box-sizing: border-box; }
body { margin: 0; font: 12px/16px "Open Sans", "Noto Sans", sans-serif; color: #000; }
h2, h3, p, ul { margin: 0; padding: 0; font-weight: normal; }
ul { list-style: none; }
svg { display: block; flex: none; }
.defs { position: absolute; }
span { white-space: nowrap; }
.host { width: 1920px; height: 1080px; display: flex; flex-direction: column; overflow: hidden; }

/* VirtualBox frame */
.vb-title { height: 22px; display: flex; align-items: center; padding: 2px 18px 0 2px; background: #fff; color: #8c8c8c; }
.vb-name { margin: 0 auto 0 5px; letter-spacing: -.3px; }
.vb-controls { margin: 0 0 3px; }
.vb-menu { height: 22px; display: flex; align-items: center; gap: 16px; padding: 1px 8px 0; background: #fff; color: #8c8c8c; font-size: 11.500px; letter-spacing: -.06px; }

/* Guest desktop */
.desktop { position: relative; height: 935px; background: #2d2d2d; overflow: hidden; }
.wall-flag { position: absolute; left: 1171px; top: 836px; }
.wall-name { position: absolute; left: 1232px; top: 833px; width: 420px; color: #fff; font: 300 38px/50px "Open Sans", sans-serif; letter-spacing: -1.150px; white-space: nowrap; -webkit-text-stroke: .5px #fff; }
.wall-name span { margin-left: -4px; }
.build { position: absolute; right: 5px; top: 888px; color: #fff; text-align: right; font-size: 15px; line-height: 24px; letter-spacing: -.42px; }

/* Windows */
.win { position: absolute; display: flex; flex-direction: column; background: #c3d5dc; border: 1px solid #5d636b; padding: 0 7px 7px; }
.caption { display: flex; height: 30px; flex: none; position: relative; align-items: center; justify-content: center; border-bottom: 1px solid #a9b9c2; }
.caption h2 { font-size: 15px; line-height: 20px; letter-spacing: -.35px; padding-bottom: 2px; color: #111; white-space: nowrap; }
.centrum h2 { letter-spacing: -.43px; }
.hours-dlg h2 { letter-spacing: -.27px; }
.cap-btns { position: absolute; right: -2px; top: 0; height: 21px; display: flex; border: 1px solid #5d636b; border-top: 0; }
.cap-btns b { display: flex; align-items: center; justify-content: center; width: 46px; }
.cap-btns b + b { border-left: 1px solid #5d636b; }
.cap-btns b:first-child:not(:last-child) { width: 28px; padding-right: 1px; }
.cap-btns b:nth-child(2):not(:last-child) { width: 26px; }
.cap-btns .q { font: bold 14px/18px "Open Sans", sans-serif; }
.client { flex: 1; background: #fff; display: flex; flex-direction: column; min-height: 0; overflow: hidden; }

.centrum { left: 397px; top: 200px; width: 1200px; height: 609px; }
.conn { left: 449px; top: 252px; width: 1200px; height: 609px; }
.addr-row { display: flex; gap: 10px; padding: 6px 11px 0 200px; height: 37px; }
.addr { flex: 1; height: 24px; border: 1px solid #858585; display: flex; align-items: center; padding-right: 6px; }
.search { width: 204px; height: 23px; border: 1px solid #858585; display: flex; align-items: center; justify-content: space-between; padding: 0 8px 0 9px; color: #6d6d6d; letter-spacing: -.33px; }
.crumb { width: 257px; text-align: right; margin-right: auto; letter-spacing: -.2px; }
.centrum .crumb { width: 311px; }
.a-chev { margin-right: 12px; }
.see-also { display: flex; flex-direction: column; gap: 7px; padding: 452px 0 0 29px; color: #1a1a66; }
.see-also .dim { color: #777; }
.cmdbar { height: 31px; background: #f0f0f0; display: flex; align-items: center; flex: none; letter-spacing: -.3px; padding: 0 14px 2px 0; }
.cmdbar .c0 { width: 406px; text-align: right; margin-right: 19px; }
.c1, .c2 { margin-right: 19px; }
.cmd-icons { margin-left: auto; }
.adapter { width: 510px; margin-top: 40px; text-align: right; color: #6d6d6d; letter-spacing: -.13px; }
.view-icons { margin: auto 7px 5px auto; }

/* Management console */
.mmc { left: 89px; top: 89px; width: 768px; height: 537px; }
.mmc .caption { justify-content: flex-start; }
.mmc-icon { margin-left: 4px; }
.mmc .client { background: #f0f0f0; }
.mmc-menu { height: 23px; display: flex; gap: 16px; padding: 3px 10px 0; border-bottom: 1px solid #a9a9a9; flex: none; letter-spacing: -.15px; }
.mmc-tools { height: 29px; padding: 0 0 0 5px; flex: none; }
.mmc-body { flex: 1; background: #ababab; padding: 0 4px 5px; display: flex; flex-direction: column; min-height: 0; }
.panes { flex: 1; border: 1px solid #828790; display: flex; background: #fff; position: relative; box-shadow: 0 -4px #e4ebfa; margin-top: 4px; min-height: 0; }
.tree-pane { width: 240px; padding: 1px 1px 0; display: flex; flex-direction: column; overflow: hidden; }
.tree { flex: 1; line-height: 18px; letter-spacing: -.3px; overflow: hidden; }
.tree li { height: 18px; padding-left: 2px; white-space: nowrap; }
.tree .t-root { text-indent: -38px; letter-spacing: -.22px; }
.tree .t-saved { text-indent: -20px; }
.tree .t-dom { text-indent: -20px; letter-spacing: 0; }
.sel { display: inline-block; margin-left: -3px; padding: 0 3px 0 2px; background: #f0f0f0; border: 1px solid #d9d9d9; line-height: 16px; }
.hscroll { height: 17px; border: 1px solid #c0c0c0; display: flex; margin-bottom: 1px; flex: none; }
.hscroll b { width: 16px; border-right: 1px solid #c0c0c0; display: flex; align-items: center; justify-content: center; }
.hscroll i { width: 72px; margin: -1px 0 -1px 22px; border: 1px solid #a0a0a0; background: repeating-linear-gradient(90deg, #606060 0 2px, #dcdcdc 2px 3px) 31px 4px / 8px 7px no-repeat #dcdcdc; }
.list-pane { flex: 1; }
.list-head { height: 20px; background: #fcfcfc; border-bottom: 1px solid #e0e0e0; }
.vscroll { width: 17px; margin: 1px; border: 1px solid #b9b9b9; display: flex; flex-direction: column; }
.vscroll b { height: 16px; display: flex; align-items: center; justify-content: center; flex: none; }
.gap { height: 50px; border-top: 1px solid #b9b9b9; flex: none; }
.thumb { flex: 1; background: #dcdcdc; border: solid #a0a0a0; border-width: 1px 0; display: flex; align-items: center; justify-content: center; padding-bottom: 2px; }
.thumb i { width: 7px; height: 8px; background: repeating-linear-gradient(#606060 0 2px, #dcdcdc 2px 3px); }
.mmc-status { height: 22px; flex: none; border-top: 1px solid #a0a0a0; background: linear-gradient(#d7d7d7, #d7d7d7) 656px 2px / 1px 100% no-repeat, linear-gradient(#d7d7d7, #d7d7d7) 741px 2px / 1px 100% no-repeat #fff; }

/* Classic dialog parts */
.props, .hours-dlg { font-family: "Liberation Sans", Arial, sans-serif; font-size: 11px; letter-spacing: -.08px; }
.props h2, .hours-dlg h2 { font-family: "Open Sans", sans-serif; }
.props .client, .hours-dlg .client { background: #f0f0f0; }
button { width: 73px; height: 22px; padding: 0; background: #ddd; border: 1px solid #707070; color: #000; font: 11px/18px "Liberation Sans", Arial, sans-serif; letter-spacing: -.1px; }
button.def { border-color: #3579b1; }
button.off { background: #f2f2f2; border-color: #b8b8b8; color: #8a8a8a; }
.radio { width: 12px; height: 12px; border: 1px solid #777; border-radius: 50%; background: #fff; flex: none; }
.radio.checked { background: radial-gradient(circle, #222 0 2.700px, #fff 3.300px); }

.props { left: 254px; top: 85px; width: 438px; height: 545px; }
.props .client { padding: 9px 6px 7px; }
.props .cap-btns b:first-child { width: 28px; padding: 0; }
.tabs { display: flex; margin: 0 2px; height: 18px; flex: none; }
.tabs span { height: 18px; background: #ebebeb; border: solid #8c8e99; border-width: 1px 1px 0 1px; line-height: 18px; text-align: center; }
.r1 span:nth-child(1) { width: 154px; padding-right: 2px; } .r1 span:nth-child(2) { width: 139px; padding-right: 2px; } .r1 span:nth-child(3) { width: 113px; padding-right: 5px; }
.r2 span:nth-child(1) { width: 129px; padding-right: 2px; } .r2 span:nth-child(2) { width: 174px; padding-right: 1px; } .r2 span:nth-child(3) { width: 103px; }
.r3 { position: relative; }
.r3 span:nth-child(1) { width: 51px; padding-right: 1px; } .r3 span:nth-child(2) { width: 45px; padding-right: 2px; } .r3 span:nth-child(3) { width: 51px; padding-right: 4px; } .r3 span:nth-child(4) { width: 45px; padding-right: 10px; } .r3 span:nth-child(5) { width: 57px; } .r3 span:nth-child(6) { width: 72px; padding-right: 1px; } .r3 span:nth-child(7) { width: 85px; }
.tabs .on { background: #fff; height: 22px; margin-top: -2px; z-index: 1; }
.page { height: 407px; background: #fff; border: 1px solid #8c8e99; padding: 0 0 36px 14px; display: flex; align-items: flex-end; }
.group { width: 358px; height: 92px; border: 1px solid #d5dfe5; border-radius: 3px; padding: 0 13px 10px 12px; display: flex; align-items: flex-end; }
.group .radio { margin-bottom: 5px; }
.group .lbl { width: 74px; padding-left: 4px; margin-bottom: 3px; }
.date { width: 246px; height: 25px; border: 1px solid #707070; display: flex; align-items: center; gap: 13px; padding: 0 6px 0 7px; color: #777; }
.date svg { margin-left: auto; }
.dlg-btns { display: flex; gap: 8px; justify-content: flex-end; padding: 7px 1px 0; }

.hours-dlg { left: 214px; top: 193px; width: 519px; height: 328px; background: #66c9ea; border-color: #24333a; }
.hours-dlg .caption { border-color: #8fb2c2; }
.hours-dlg .cap-btns { background: #c3594f; border-color: #6b3532; right: -2px; }
.hours-dlg .cap-btns b { width: 33px; padding-left: 1px; }
.hours-dlg .client { flex-direction: row; border-bottom: 1px solid #a0b4bd; padding: 10px 0 0 10px; }
.sched { width: 333px; }
.sky { display: flex; justify-content: space-between; padding: 2px 15px 0 85px; }
.ticks { display: flex; height: 15px; line-height: 14px; margin: 0 0 0 90px; }
.ticks span, .ticks i { width: 9px; display: flex; justify-content: center; font-style: normal; flex: none; }
.ticks i { font-weight: bold; }
.day { display: flex; height: 25px; margin-left: 2px; }
.day b { width: 92px; font-weight: normal; text-align: center; line-height: 25px; border: solid; border-width: 1px 1px 1px 0; border-color: #fff #a0a0a0 #a0a0a0; }
.mon { height: 26px; }
.bar { width: 216px; border-bottom: 1px solid #f0f0f0; background: repeating-linear-gradient(90deg, #f0f0f0 0 1px, #00f 1px 9px); }
.h11 { width: 99px; } .h6 { width: 54px; } .h7 { width: 63px; }
.deny { background: repeating-linear-gradient(90deg, #f0f0f0 0 1px, #fff 1px 9px); }
.mon .bar { border-top: 1px solid #fff; }
.cols { width: 217px; border-bottom: 1px solid #a0a0a0; background: repeating-linear-gradient(90deg, #fff 0 1px, #f0f0f0 1px 8px, #a0a0a0 8px 9px); }
.cursor { display: block; width: 10px; height: 25px; border: 1px dotted #fff; outline: 1px dotted #000; outline-offset: -1px; margin-top: -1px; background: #000; box-shadow: inset 0 0 0 1px #fff, inset 0 0 0 5px #00f; }
.range { padding: 10px 0 0; letter-spacing: -.02px; }
.side { display: flex; flex-direction: column; gap: 6px; padding: 2px 0 0; }
.opts { display: flex; margin-top: 43px; margin-left: -1px; }
.swatches i { display: block; width: 9px; height: 26px; border: solid #a0a0a0; border-width: 1px 0 0 1px; background: #fff; }
.swatches .allow { background: #00f; }
.radios { display: flex; flex-direction: column; gap: 8px; padding: 6px 0 0 8px; letter-spacing: -.2px; }
.radios label { display: flex; align-items: center; gap: 4px; }

/* Taskbar previews */
.peek { position: absolute; left: 1px; top: 772px; width: 669px; height: 155px; background: #54a8c4; border: 1px solid #2c5f70; display: flex; gap: 14px; padding: 15px; z-index: 2; }
.card { width: 203px; }
.card h3 { display: flex; height: 22px; padding: 1px 0 0 1px; font-size: 12px; }
.card h3 span { flex: 1; text-align: center; line-height: 18px; letter-spacing: -.32px; padding-right: 17px; }
.shot { border: 1px solid #2c5f70; box-sizing: content-box; background: #fff; }
.blank { display: flex; align-items: center; justify-content: center; background: linear-gradient(#fff, #c9c9c9); padding-bottom: 4px; box-sizing: border-box; width: 203px; height: 100px; }

/* Guest taskbar */
.vm-bar { height: 40px; background: #66c9ea; border: 1px solid #5b6a70; display: flex; align-items: center; flex: none; }
.vt { height: 38px; display: flex; align-items: center; justify-content: center; border-right: 1px solid #3c7f97; flex: none; }
.start { width: 51px; padding-right: 2px; }
.srv { width: 62px; padding-right: 4px; background: #79d1ec; box-shadow: inset -2px 0 #66c9ea, inset -3px 0 #3c7f97; }
.ps { width: 59px; background: #79d1ec; }
.exp { width: 65px; }
.ad { width: 59px; background: #a3dff4; box-shadow: inset -4px 0 #a3dff4, inset -5px 0 #3c7f97; padding: 0 7px 6px 0; }
.stack1 { width: 3px; }
.cp { width: 51px; background: linear-gradient(135deg, #4d9fcf, #79b9dd 60%, #9fd0ea); }
.stack2 { width: 8px; background: repeating-linear-gradient(90deg, #57b3d6 0 3px, #3c7f97 3px 4px); }
.vm-tray { margin: 0 13px 0 auto; }
.vm-clock, .h-clock { text-align: center; font-size: 11.500px; line-height: 16px; letter-spacing: -.1px; }
.vm-clock { width: 60px; margin-right: 17px; color: #0d2530; }
.vb-status { height: 21px; background: #f0f0f0; display: flex; align-items: center; justify-content: flex-end; gap: 3px; padding-right: 1px; flex: none; }
.vb-status svg { width: 16px; height: 16px; }
.vb-status span { font-size: 11.500px; letter-spacing: -.5px; }

/* Host taskbar */
.host-bar { height: 40px; background: #060a11; color: #fff; display: flex; align-items: center; flex: none; }
.ht { width: 49px; height: 40px; display: flex; align-items: center; justify-content: center; position: relative; }
.ht:nth-child(-n+3) { width: 48px; }
.fx { margin-left: 2px; }
.ht.on { background: linear-gradient(#76b9ed, #76b9ed) 50% 100% / 40px 2px no-repeat; }
.ht.multi { background: linear-gradient(90deg, #76b9ed 31px, #0000 31px 32px, #4b7ba3 32px) 50% 100% / 40px 2px no-repeat; }
.vbox { padding-right: 3px; }
.vm em { position: absolute; right: 13px; bottom: 9px; font: bold 8px/8px "Open Sans", sans-serif; text-shadow: 0 0 1px #000, 0 0 1px #000; }
.vm small { position: absolute; left: 14px; top: 9px; font: bold 6px/7px "Open Sans", sans-serif; color: #222; }
.h-tray { margin-left: auto; margin-right: -1px; }
.h-clock { width: 60px; line-height: 18px; }
.notif { width: 38px; height: 38px; margin: 0 4px 0 14px; padding: 10px 0 0 1px; border-right: 1px solid #555; position: relative; }
.notif b { position: absolute; left: 9px; top: 19px; width: 15px; height: 15px; border: 1px solid #aaa; border-radius: 50%; background: #333; font: 10px/13px "Open Sans", sans-serif; text-align: center; }
```
